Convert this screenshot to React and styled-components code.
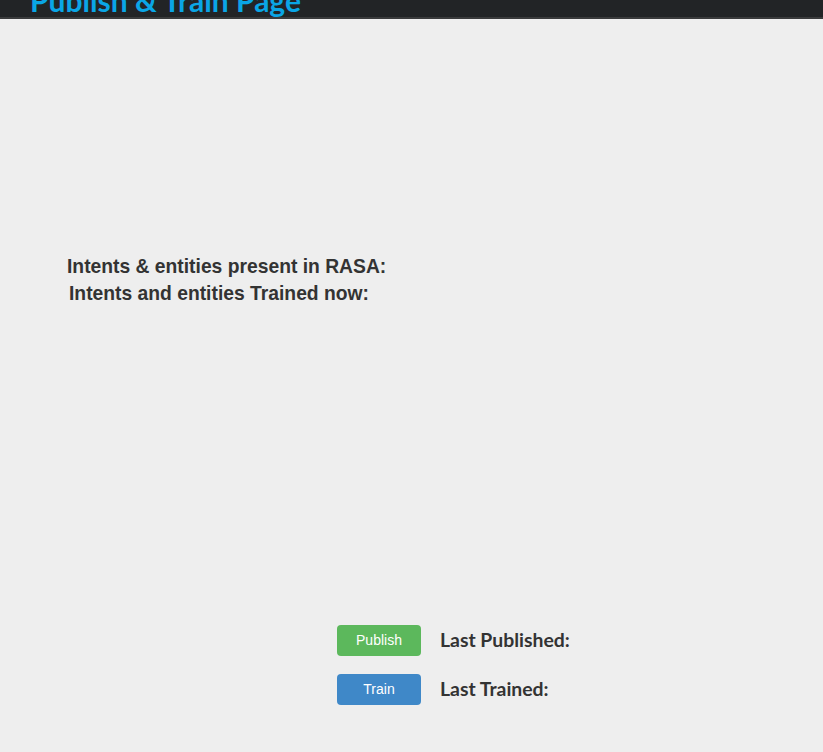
import React from 'react'
import styled, {createGlobalStyle} from 'styled-components'

const GlobalStl = createGlobalStyle`
  html, body {
    margin: 0;
    padding: 0;
    background: #eeeeee;
    overflow: hidden;
  }
`

const PageStl = styled.div`
  width: 823px;
  height: 752px;
  background: #eeeeee;
  display: flex;
  flex-direction: column;
`

const HeaderStl = styled.div`
  height: 17px;
  background: #222426;
  border-bottom: 2px solid #3a3b3c;
  overflow: hidden;
  padding-left: 30px;
`

const TitleStl = styled.h1`
  margin: -14.8px 0 0;
  font-family: Lato, "Open Sans", sans-serif;
  font-weight: 700;
  font-size: 30px;
  line-height: 30px;
  color: #0aa6e6;
  white-space: nowrap;
`

const InfoStl = styled.div`
  margin-top: 237px;
  display: flex;
  flex-direction: column;
  gap: 5px;
`

const InfoLineStl = styled.div`
  padding-left: ${p => p.$indent}px;
  font-family: "Liberation Sans", Arial, sans-serif;
  font-weight: 700;
  font-size: 19.3px;
  line-height: 22px;
  color: #333333;
`

const ActionsStl = styled.div`
  margin-top: 320px;
  padding-left: 337px;
  display: flex;
  flex-direction: column;
  gap: 18px;
`

const RowStl = styled.div`
  display: flex;
  align-items: center;
  gap: 19px;
`

const ButtonStl = styled.button`
  width: 84px;
  height: 31px;
  border: none;
  border-radius: 4px;
  background: ${p => p.$color};
  color: #ffffff;
  font-family: "Liberation Sans", Arial, sans-serif;
  font-size: 14px;
  line-height: 16px;
  padding: 0 0 2px;
`

const StatusStl = styled.div`
  font-family: Lato, "Open Sans", sans-serif;
  font-weight: 700;
  font-size: 19.4px;
  line-height: 22px;
  color: #333333;
  margin-top: -2px;
`

export default function App() {
    return (
        <PageStl>
            <GlobalStl/>
            <HeaderStl>
                <TitleStl>Publish &amp; Train Page</TitleStl>
            </HeaderStl>
            <InfoStl>
                <InfoLineStl $indent={67}>Intents &amp; entities present in RASA:</InfoLineStl>
                <InfoLineStl $indent={69}>Intents and entities Trained now:</InfoLineStl>
            </InfoStl>
            <ActionsStl>
                <RowStl>
                    <ButtonStl $color="#5cb85c">Publish</ButtonStl>
                    <StatusStl>Last Published:</StatusStl>
                </RowStl>
                <RowStl>
                    <ButtonStl $color="#3f88c8">Train</ButtonStl>
                    <StatusStl>Last Trained:</StatusStl>
                </RowStl>
            </ActionsStl>
        </PageStl>
    )
}
